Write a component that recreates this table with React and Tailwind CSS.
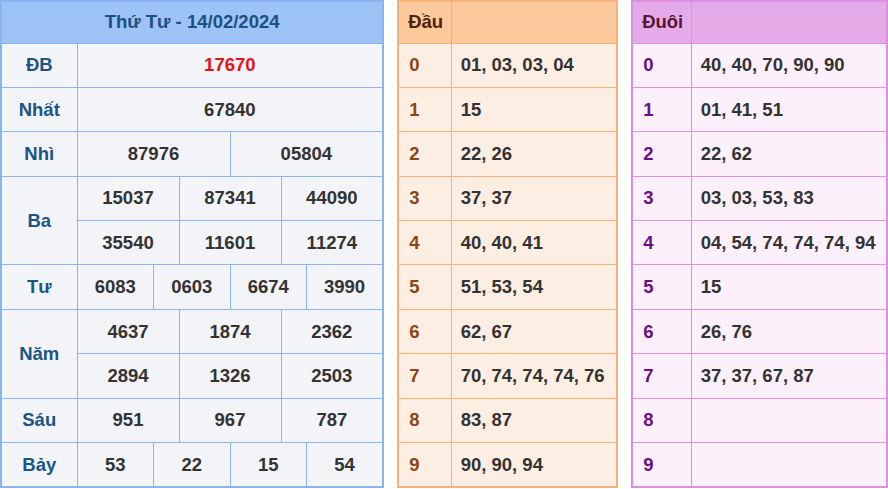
import React from 'react';

const prizes = [
  { label: 'ĐB', rows: [['17670']], red: true },
  { label: 'Nhất', rows: [['67840']] },
  { label: 'Nhì', rows: [['87976', '05804']] },
  { label: 'Ba', rows: [['15037', '87341', '44090'], ['35540', '11601', '11274']] },
  { label: 'Tư', rows: [['6083', '0603', '6674', '3990']] },
  { label: 'Năm', rows: [['4637', '1874', '2362'], ['2894', '1326', '2503']] },
  { label: 'Sáu', rows: [['951', '967', '787']] },
  { label: 'Bảy', rows: [['53', '22', '15', '54']] },
];

const dau = ['01, 03, 03, 04', '15', '22, 26', '37, 37', '40, 40, 41', '51, 53, 54', '62, 67', '70, 74, 74, 74, 76', '83, 87', '90, 90, 94'];
const duoi = ['40, 40, 70, 90, 90', '01, 41, 51', '22, 62', '03, 03, 53, 83', '04, 54, 74, 74, 74, 94', '15', '26, 76', '37, 37, 67, 87', '', ''];

// số cột con cho mỗi kiểu chia
const spanFor = (n) => (n === 1 ? 12 : n === 2 ? 6 : n === 3 ? 4 : 3);

const ResultTable = () => (
  <table className="table-fixed border-collapse border-2 border-[#8ab4f0] w-[383px] shrink-0">
    <colgroup>
      <col className="w-[76px]" />
      {Array.from({ length: 12 }).map((_, i) => (
        <col key={i} className="w-[25.5px]" />
      ))}
    </colgroup>
    <thead>
      <tr className="h-[42px] bg-[#9ec3f6]">
        <th colSpan={13} className="border border-[#8ab4f0] text-[18.5px] font-bold text-[#1c4f82]">
          Thứ Tư - 14/02/2024
        </th>
      </tr>
    </thead>
    <tbody>
      {prizes.map((p) =>
        p.rows.map((row, ri) => (
          <tr key={p.label + ri} className="h-[44.4px] bg-[#f2f4f8]">
            {ri === 0 && (
              <td rowSpan={p.rows.length} className="border border-[#8ab4f0] text-center text-[18.5px] font-bold text-[#1b5485]">
                {p.label}
              </td>
            )}
            {row.map((v, vi) => (
              <td
                key={vi}
                colSpan={spanFor(row.length)}
                className={`border border-[#8ab4f0] text-center text-[18.5px] font-bold ${p.red ? 'text-[#e4121b]' : 'text-[#333333]'}`}
              >
                {v}
              </td>
            ))}
          </tr>
        ))
      )}
    </tbody>
  </table>
);

const LotoTable = ({ title, data, width, labelW, c }) => (
  <table className={`table-fixed border-collapse border-2 shrink-0 ${width} ${c.border}`}>
    <colgroup>
      <col className={labelW} />
      <col />
    </colgroup>
    <thead>
      <tr className={`h-[42px] ${c.head}`}>
        <th className={`border ${c.border} pl-[9px] text-left text-[18.5px] font-bold ${c.headText}`}>{title}</th>
        <th className={`border ${c.border}`}></th>
      </tr>
    </thead>
    <tbody>
      {data.map((v, i) => (
        <tr key={i} className={`h-[44.4px] ${c.cell}`}>
          <td className={`border ${c.border} pl-[10px] text-[18.5px] font-bold ${c.digit}`}>{i}</td>
          <td className={`border ${c.border} pl-[9px] text-[18.5px] font-bold text-[#333333] whitespace-nowrap`}>{v}</td>
        </tr>
      ))}
    </tbody>
  </table>
);

export default function App() {
  return (
    <div className="w-[888px] h-[489px] overflow-hidden bg-white flex items-start gap-[13px] font-['Liberation_Sans',Arial,sans-serif]">
      <ResultTable />
      <LotoTable
        title="Đầu"
        data={dau}
        width="w-[221px]"
        labelW="w-[53px]"
        c={{
          border: 'border-[#f6b07a]',
          head: 'bg-[#fbc99b]',
          headText: 'text-[#4d2208]',
          cell: 'bg-[#fdeee3]',
          digit: 'text-[#8a4713]',
        }}
      />
      <LotoTable
        title="Đuôi"
        data={duoi}
        width="w-[257px]"
        labelW="w-[59px]"
        c={{
          border: 'border-[#df8fdf]',
          head: 'bg-[#e4abe8]',
          headText: 'text-[#5a1436]',
          cell: 'bg-[#fcf0fb]',
          digit: 'text-[#6c0e8a]',
        }}
      />
    </div>
  );
}
